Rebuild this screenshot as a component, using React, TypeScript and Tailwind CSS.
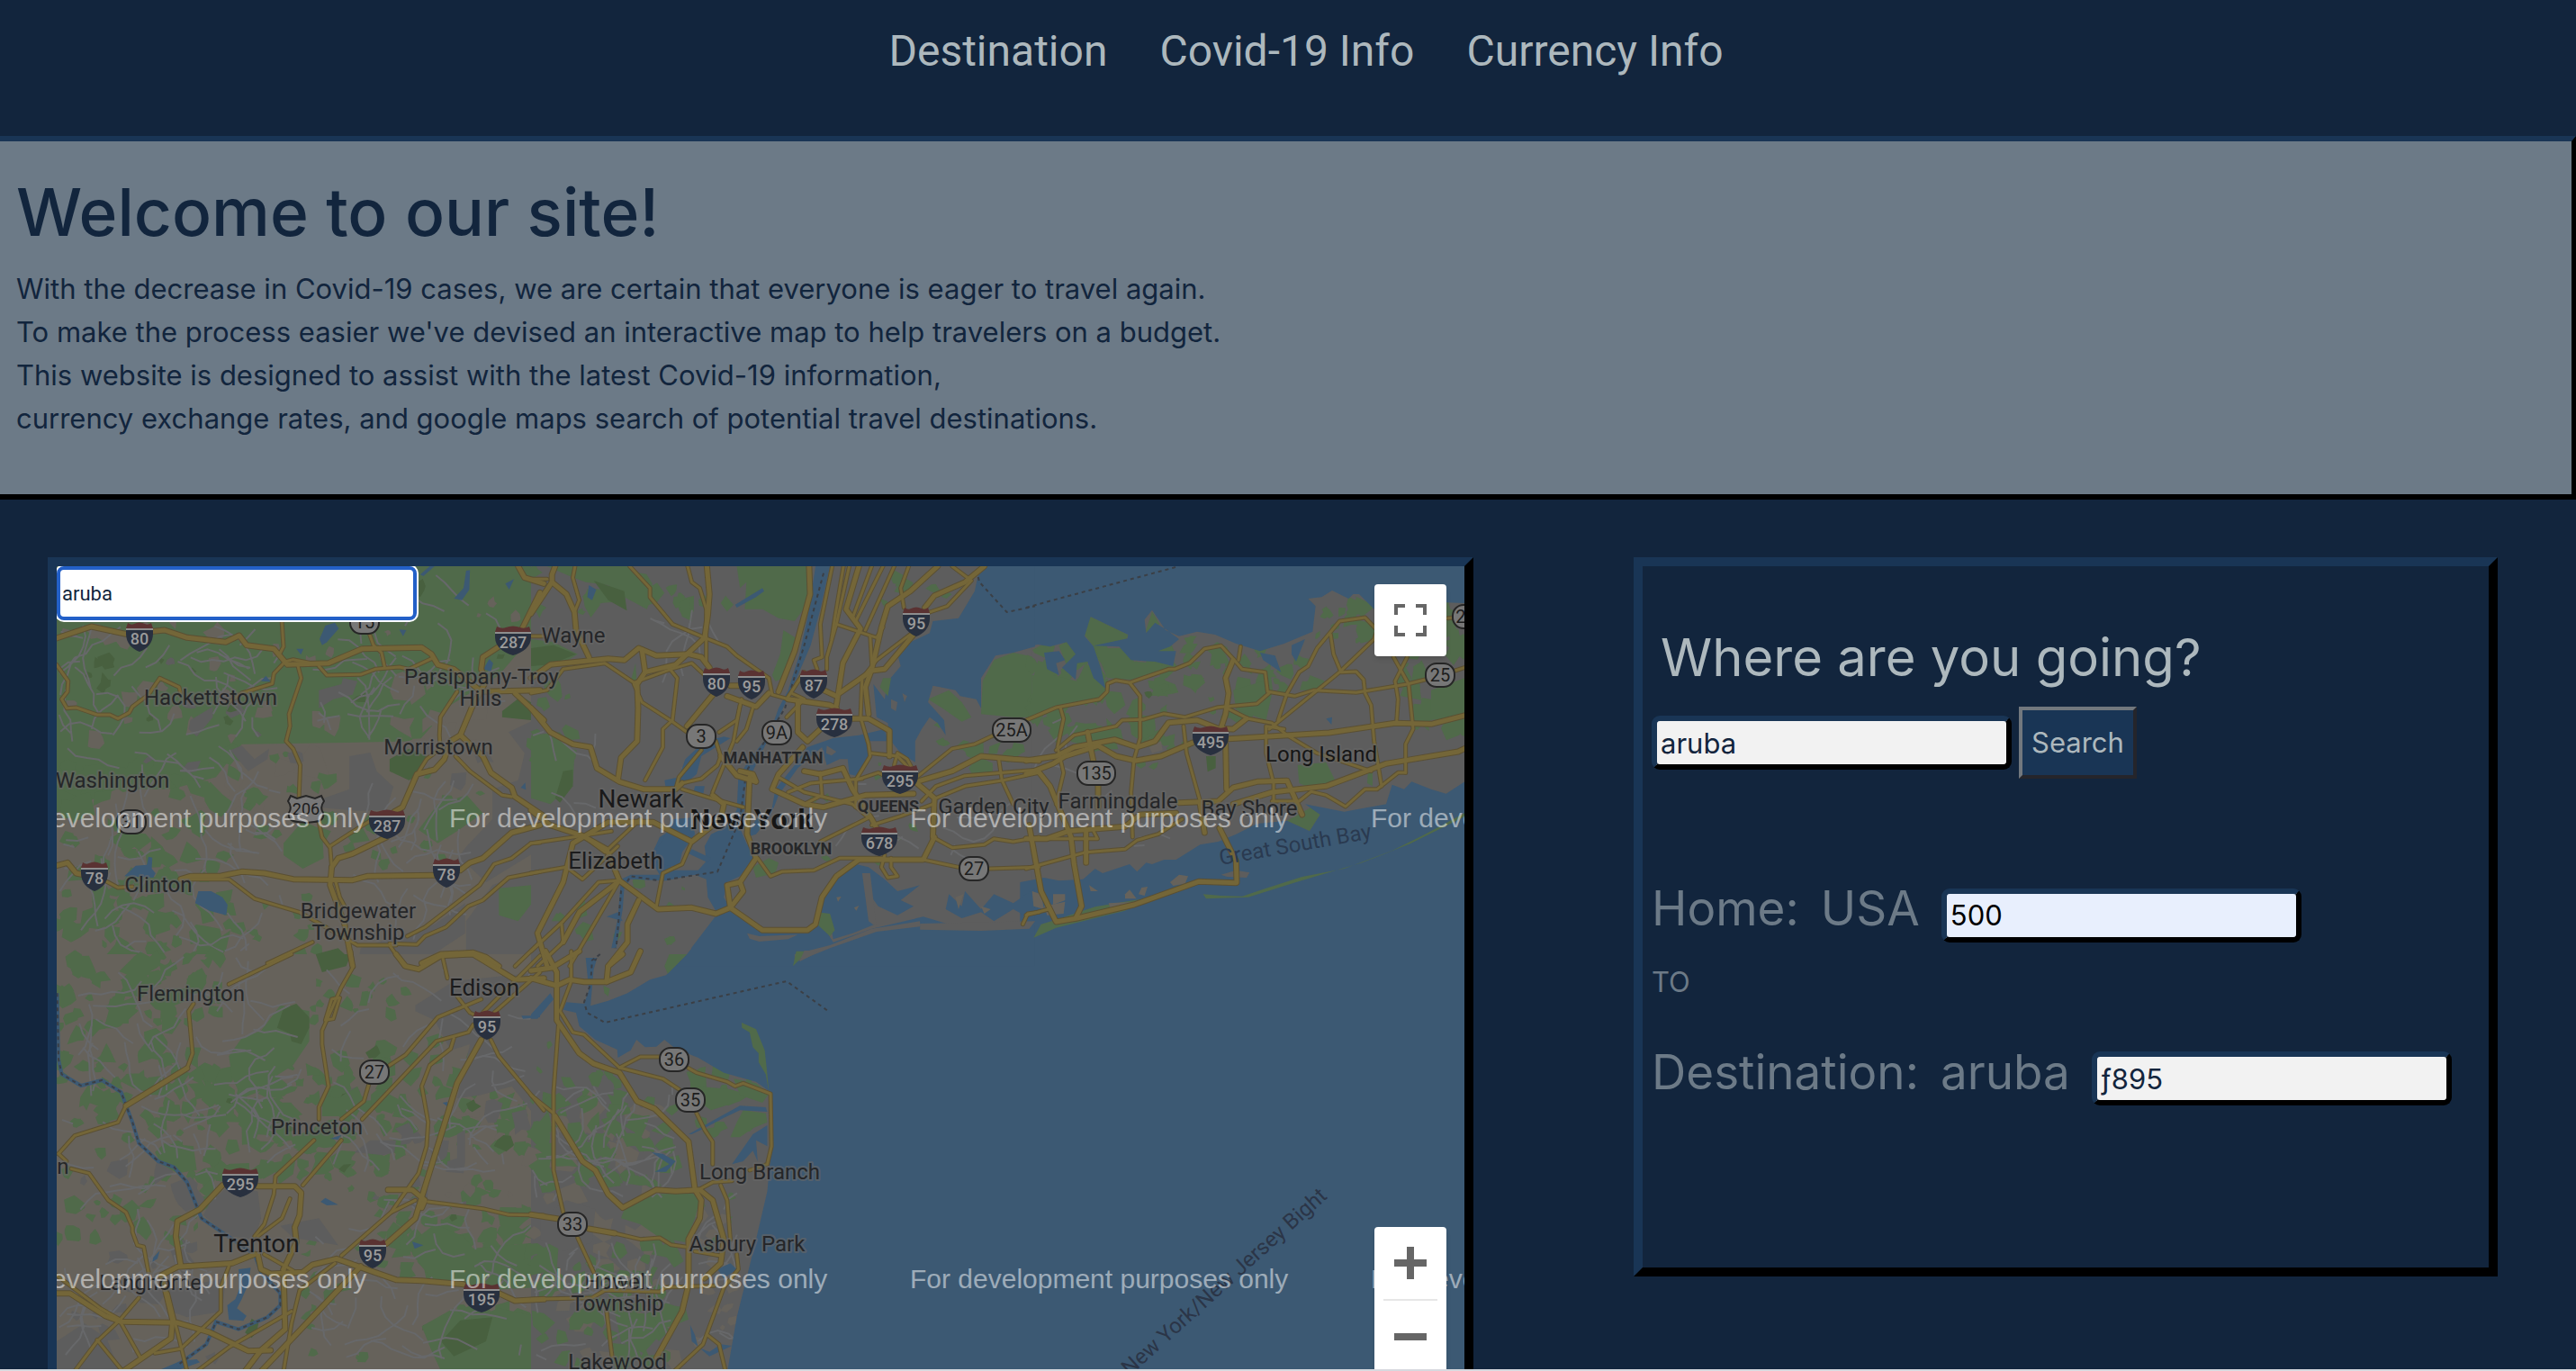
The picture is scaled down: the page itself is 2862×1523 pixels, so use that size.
import React from "react";

type Patch = { c: string; p: string };
type Scatter = { c: string; x: number; y: number; w: number; h: number; n: number; s: number };
type Tile = {
  t: string;
  base: Patch[];
  scatter: Scatter[];
  lanes: { x: number; y: number; w: number; h: number; n: number }[];
  areas: Patch[];
  water: string[];
  islands: Patch[];
  highways: string[];
  roads: string[];
  dashes: string[];
};

const WATER = "#3c5973";
const URBAN = "#5d5d5d";
const RURAL = "#66625b";
const GREEN = "#506a4a";
const FOREST = "#48603f";

function random(seed: number) {
  let s = seed;
  return () => {
    s = (s * 1664525 + 1013904223) % 4294967296;
    return s / 4294967296;
  };
}

function blobs(r: Scatter, seed: number) {
  const rnd = random(seed);
  let d = "";
  for (let i = 0; i < r.n; i++) {
    const cx = r.x + rnd() * r.w;
    const cy = r.y + rnd() * r.h;
    const k = 5 + Math.floor(rnd() * 4);
    const size = r.s * (0.4 + rnd());
    for (let j = 0; j < k; j++) {
      const a = (j / k) * Math.PI * 2 + rnd() * 0.7;
      const m = size * (0.35 + rnd() * 0.75);
      d += `${j ? "L" : "M"}${Math.round(cx + Math.cos(a) * m)} ${Math.round(cy + Math.sin(a) * m)}`;
    }
    d += "Z";
  }
  return d;
}

function laneLines(r: { x: number; y: number; w: number; h: number; n: number }, seed: number) {
  const rnd = random(seed);
  let d = "";
  for (let i = 0; i < r.n; i++) {
    let x = r.x + rnd() * r.w;
    let y = r.y + rnd() * r.h;
    let a = rnd() * Math.PI * 2;
    d += `M${Math.round(x)} ${Math.round(y)}`;
    const k = 3 + Math.floor(rnd() * 5);
    for (let j = 0; j < k; j++) {
      a += (rnd() - 0.5) * 1.3;
      x += Math.cos(a) * 36;
      y += Math.sin(a) * 36;
      if (x < r.x || x > r.x + r.w || y < r.y || y > r.y + r.h) break;
      d += `L${Math.round(x)} ${Math.round(y)}`;
    }
  }
  return d;
}

const tiles: Tile[] = [
  {
    t: "translate(40 610) scale(0.35714 0.33333)",
    base: [
      { c: RURAL, p: "0,0 1568,0 1568,1390 0,1390" },
      { c: GREEN, p: "0,0 1568,0 1568,260 1440,420 1290,520 1190,640 960,645 640,650 560,760 420,800 250,800 120,860 0,900" },
    ],
    scatter: [
      { c: RURAL, x: 80, y: 240, w: 850, h: 400, n: 30, s: 34 },
      { c: RURAL, x: 500, y: 660, w: 400, h: 200, n: 8, s: 50 },
      { c: RURAL, x: 1100, y: 420, w: 300, h: 260, n: 14, s: 45 },
      { c: RURAL, x: 900, y: 130, w: 600, h: 150, n: 6, s: 22 },
      { c: GREEN, x: 70, y: 700, w: 520, h: 640, n: 90, s: 46 },
      { c: GREEN, x: 600, y: 680, w: 320, h: 200, n: 12, s: 32 },
      { c: GREEN, x: 600, y: 850, w: 320, h: 500, n: 18, s: 28 },
      { c: GREEN, x: 950, y: 900, w: 330, h: 160, n: 14, s: 26 },
      { c: GREEN, x: 1150, y: 700, w: 250, h: 150, n: 8, s: 26 },
      { c: URBAN, x: 100, y: 300, w: 1300, h: 500, n: 10, s: 28 },
      { c: FOREST, x: 80, y: 100, w: 1400, h: 500, n: 14, s: 26 },
    ],
    lanes: [
      { x: 70, y: 250, w: 700, h: 400, n: 34 },
      { x: 860, y: 80, w: 600, h: 560, n: 34 },
      { x: 70, y: 650, w: 700, h: 700, n: 48 },
      { x: 950, y: 760, w: 420, h: 560, n: 26 },
    ],
    areas: [
      { c: URBAN, p: "975,690 1040,678 1060,740 1112,792 1090,870 1000,872 890,862 895,830 975,800" },
      { c: URBAN, p: "1568,560 1470,610 1520,680 1500,770 1420,800 1420,900 1340,990 1290,1060 1350,1060 1400,1110 1568,1000" },
      { c: URBAN, p: "1338,1240 1420,1120 1568,1060 1568,1390 1338,1390" },
      { c: URBAN, p: "1240,1250 1335,1180 1335,1280 1180,1390 1000,1390 1010,1330" },
      { c: URBAN, p: "480,570 550,525 550,560 500,625 475,600" },
      { c: URBAN, p: "880,470 950,450 955,430 1000,440 985,485 925,500 880,530" },
      { c: URBAN, p: "605,670 640,655 680,700 725,665 720,700 660,740" },
      { c: GREEN, p: "1440,1130 1540,1120 1550,1170 1500,1240 1440,1220" },
      { c: GREEN, p: "770,980 830,905 890,935 895,1030 830,1065 770,1020" },
      { c: GREEN, p: "1190,935 1250,850 1340,820 1390,880 1310,940 1250,980" },
      { c: FOREST, p: "1100,700 1160,665 1215,690 1200,750 1160,770 1100,740" },
      { c: FOREST, p: "1450,540 1510,490 1568,530 1540,570 1450,560" },
      { c: FOREST, p: "860,1390 870,1350 940,1330 970,1360 960,1390" },
    ],
    water: [
      "495,1180 505,1140 545,1140 580,1160 596,1185 592,1220 540,1205",
      "275,1090 310,1055 345,1052 350,1025 362,1028 360,1065 372,1080 365,1095",
      "882,300 900,255 930,245 942,265 905,310 890,320",
      "1300,165 1330,130 1338,72 1350,70 1348,135 1325,170",
      "810,332 832,332 824,352",
      "1130,268 1152,270 1142,290",
      "1460,115 1487,100 1472,135",
      "1392,400 1410,366 1422,380 1415,408",
      "700,440 715,422 730,442",
      "1508,795 1522,778 1524,802",
      "1195,85 1225,57 1240,57 1205,90",
    ],
    islands: [],
    highways: [
      "64,297 172,258 280,283 400,270 470,295 590,310 632,288 655,320 740,332 782,385 910,380 1015,332 1200,328 1230,350 1250,385 1300,400 1385,475 1568,470",
      "920,1060 915,1120 960,1250 985,1390",
      "450,1100 480,1090 570,1090 640,1075 710,1080 800,1100 985,1103 1030,1090 1240,1087",
      "1320,1070 1350,1045 1390,1030 1480,945 1568,920",
      "1090,960 985,1015 940,1030 920,1060",
      "1440,325 1390,360 1385,400 1400,440 1355,530 1320,620 1290,640 1270,700 1240,735 1185,750 1140,860 1115,875",
      "1320,620 1390,690 1415,745 1480,795 1490,825 1580,890",
      "1490,480 1580,570",
      "1500,57 1520,95 1580,115",
      "1568,145 1510,270",
      "1200,1380 1260,1350 1360,1345 1400,1360 1440,1390",
      "64,1055 98,1045 125,1080 145,1085",
    ],
    roads: [
      "64,385 100,440 98,475 80,500 96,530 125,528 190,552 230,552 255,565 290,545 300,525 350,485 385,430 445,460 450,480",
      "600,510 640,480 735,448 740,415 775,375 800,368 880,385",
      "880,390 905,420 1010,418 1055,400 1130,393 1160,400 1230,365",
      "765,243 770,325 760,345",
      "1035,275 1050,320 1075,345 1085,395",
      "815,390 825,430 787,550 790,590 778,640 800,665 822,720 818,830",
      "880,910 890,960 915,995 920,1060",
      "915,990 980,945 1040,905",
      "1310,475 1258,560 1255,620 1258,665 1215,700 1180,760 1140,860",
      "1305,690 1350,740 1450,820 1480,825",
      "220,1108 255,1128 300,1125",
      "480,1100 600,1100 680,1165 820,1210 1000,1320 1120,1320",
      "1155,1290 1210,1260 1380,1120 1425,1050 1480,1030 1540,980 1568,978",
      "1100,1315 1185,1318 1210,1290 1275,1260 1345,1190 1390,1170 1470,1095 1568,1075",
      "720,1380 860,1310",
      "1100,1320 1145,1390",
      "930,1100 945,1160 960,1190",
      "1540,290 1580,290",
      "1490,1390 1568,1310",
    ],
    dashes: [],
  },
  {
    t: "translate(590 610) scale(0.35714 0.33333)",
    base: [{ c: URBAN, p: "0,0 1568,0 1568,1390 0,1390" }],
    scatter: [
      { c: GREEN, x: 0, y: 60, w: 550, h: 150, n: 14, s: 34 },
      { c: GREEN, x: 0, y: 470, w: 130, h: 280, n: 12, s: 34 },
      { c: GREEN, x: 1080, y: 70, w: 280, h: 160, n: 8, s: 26 },
      { c: GREEN, x: 1250, y: 570, w: 310, h: 160, n: 12, s: 32 },
      { c: GREEN, x: 20, y: 1100, w: 500, h: 270, n: 12, s: 22 },
      { c: GREEN, x: 750, y: 600, w: 500, h: 450, n: 10, s: 18 },
    ],
    lanes: [
      { x: 350, y: 200, w: 250, h: 560, n: 8 },
      { x: 900, y: 780, w: 600, h: 260, n: 8 },
      { x: 0, y: 600, w: 220, h: 300, n: 6 },
    ],
    areas: [
      { c: GREEN, p: "50,57 300,57 390,130 360,200 290,160 240,120 170,110 120,90" },
      { c: GREEN, p: "640,57 860,57 862,180 820,240 770,230 720,200 665,200 670,110 650,130" },
      { c: GREEN, p: "785,270 830,300 790,430 760,440 750,420 775,350" },
      { c: GREEN, p: "0,300 70,310 145,350 100,380 50,400 0,420" },
      { c: GREEN, p: "0,620 90,610 135,690 130,780 60,850 0,830" },
      { c: GREEN, p: "590,180 605,155 630,185 610,208" },
      { c: GREEN, p: "460,180 490,160 500,240 470,225" },
      { c: GREEN, p: "325,380 330,470 310,440" },
      { c: GREEN, p: "1235,500 1300,470 1340,510 1370,560 1340,575 1280,530" },
      { c: GREEN, p: "1405,440 1440,370 1500,345 1568,360 1568,560 1500,560 1400,550" },
      { c: GREEN, p: "690,1060 740,1030 770,1045 760,1080 700,1095" },
      { c: GREEN, p: "415,1380 430,1345 520,1340 470,1390" },
      { c: GREEN, p: "140,1180 165,1160 175,1220 150,1230" },
      { c: FOREST, p: "195,105 290,140 298,205 240,170" },
      { c: FOREST, p: "0,330 70,320 140,350 60,385 0,390" },
      { c: FOREST, p: "100,740 130,735 130,790 90,845 75,830" },
    ],
    water: [
      "1420,57 1568,57 1568,325 1500,345 1445,355 1400,430 1400,530 1385,500 1335,490 1320,470 1250,455 1235,510 1285,570 1290,620 1265,580 1240,560 1215,600 1195,640 1195,710 1150,680 1120,640 1110,580 1075,560 1065,450 1100,500 1110,440 1150,390 1140,350 1180,310 1240,280 1250,240 1330,230 1380,140 1390,90",
      "885,57 930,57 900,200 870,320 830,420 780,540 730,650 690,740 665,800 665,860 650,930 670,980 690,1010 690,1040 650,1090 610,1110 600,1160 620,1200 580,1215 550,1160 545,1100 510,1085 420,1105 310,1100 290,1130 285,1200 265,1330 200,1390 180,1390 250,1330 270,1230 280,1100 310,1085 400,1085 370,1030 400,960 430,940 425,1010 440,1070 520,1070 545,1040 540,990 560,950 600,930 640,870 645,760 680,700 740,620 770,530 800,470 835,350 860,230",
      "860,660 940,630 1020,620 1100,600 1110,640 1040,640 1060,690 1040,720 1010,755 990,750 985,700 960,700 920,720 905,660 830,730 770,820 745,890 700,950 670,960 700,900 750,860 760,800 820,720",
      "415,770 460,760 480,700 540,640 600,625 620,630 530,690 515,750 470,790 420,800",
      "400,1050 370,1030 410,970 440,900 500,895 510,950 470,1010 460,1060",
      "890,1240 910,1150 960,1090 1010,1050 1050,1060 1100,1100 1140,1140 1210,1120 1150,1170 1190,1190 1140,1220 1080,1190 1060,1160 1070,1250 1000,1280 940,1300 930,1240",
      "455,1390 580,1215 620,1195 700,1250 740,1280 860,1280 900,1240 940,1310 1060,1265 1220,1225 1300,1250 1568,1245 1568,1390",
      "635,185 720,130 725,140 700,160 640,195",
      "175,160 180,120 203,135 190,170",
      "1290,1200 1300,1150 1340,1190 1350,1140 1400,1200 1440,1150 1500,1180 1568,1130 1568,1240 1500,1200 1440,1240 1400,1210 1340,1230",
      "500,1000 560,1030 550,1045 490,1015",
      "510,790 540,790 535,820 505,810",
      "235,1225 270,1210 285,1240",
    ],
    islands: [
      { c: URBAN, p: "672,1280 710,1290 830,1285 800,1300 710,1308 680,1298" },
      { c: URBAN, p: "820,1350 930,1320 1060,1265 1210,1240 1210,1258 1075,1275 930,1330 820,1378" },
      { c: URBAN, p: "1210,1248 1568,1240 1550,1265 1400,1272 1210,1268" },
      { c: URBAN, p: "1030,1080 1055,1080 1075,1260 1050,1240" },
      { c: URBAN, p: "920,655 950,675 935,688 918,680" },
      { c: URBAN, p: "1120,500 1140,510 1135,540 1120,530" },
      { c: URBAN, p: "1155,480 1170,490 1162,510" },
      { c: GREEN, p: "1095,430 1120,430 1110,490 1085,460" },
      { c: GREEN, p: "890,1210 930,1215 945,1270 930,1290 890,1250" },
      { c: RURAL, p: "950,1160 965,1158 955,1175" },
      { c: RURAL, p: "1005,1195 1020,1188 1012,1205" },
      { c: RURAL, p: "1320,1160 1345,1150 1330,1200" },
      { c: RURAL, p: "1400,1190 1430,1200 1410,1215" },
    ],
    highways: [
      "75,57 65,85 65,110 0,215",
      "65,110 110,150 135,210 140,270 180,360",
      "0,430 60,385 150,375 240,365 290,370 335,330 390,355 490,350 530,360 555,395",
      "345,335 355,410 330,450 333,530 330,640 280,695 270,770",
      "355,410 450,385 540,295 550,220 555,150 547,57",
      "0,530 60,610 130,650 185,660 205,730 275,775 350,800 450,800 470,780",
      "865,57 868,150 820,340 770,475",
      "570,480 485,590",
      "610,490 700,525 740,480",
      "800,500 930,520 950,530",
      "830,510 830,610 860,640 900,600",
      "565,820 600,850 590,900 500,975 380,910 240,910 130,980 100,1110 20,1280 50,1390",
      "0,870 60,920 160,955 235,1000 275,1105 395,1200 500,1195 575,1215 620,1195 720,1270 860,1270 885,1250 905,1160 950,1090 1020,1035 1100,1035 1220,1035 1255,960",
      "100,1310 150,1210 270,1110",
      "620,1195 610,1120 650,1110 660,1140 620,1195",
      "650,1110 700,1030 672,950 680,760",
      "335,1170 300,1250 300,1310 240,1390",
      "845,660 770,750 750,800 850,850 910,860 1040,820 1190,815",
      "850,740 900,750 970,730 1000,800 1060,900 1075,930",
      "1200,775 1310,740 1400,690 1500,700 1580,705",
      "1410,57 1350,110 1255,155 1225,195",
      "1265,57 1180,140 1110,190 1090,260 1060,400 1040,460 1050,550",
      "1020,57 980,200 1025,265 970,380 950,520",
      "1190,285 1100,400 1060,405 960,480",
      "1000,565 1050,565 1115,605 1115,690",
      "590,690 640,755 700,775 690,750 650,740",
      "1200,780 1255,830 1250,960",
      "620,455 650,455",
      "910,470 950,490",
    ],
    roads: [
      "0,100 50,100",
      "137,57 130,95 150,170 135,210",
      "0,480 50,470 100,400 230,380 320,445 435,400 500,380 545,425",
      "307,57 370,130 370,160 440,250 540,295 610,325 640,355 740,430 750,485 800,500",
      "487,57 500,110 525,130 545,200 545,380",
      "320,450 345,510 440,575 485,610",
      "425,390 455,430 440,570 410,600 410,660 355,770",
      "450,800 460,760 530,670",
      "655,500 640,570 585,610",
      "690,530 670,600 640,640",
      "575,640 590,690 580,720 530,765 470,780",
      "650,520 630,640 565,810",
      "795,560 850,500 810,480",
      "795,500 850,410",
      "937,57 900,250 905,360 880,370 890,400",
      "990,57 950,250 920,360 920,400",
      "972,57 945,230 935,300",
      "1060,57 1000,230",
      "1095,57 1010,240",
      "1130,57 1040,270",
      "1175,57 1150,130 1160,195",
      "1310,57 1370,105 1295,190 1240,210",
      "1185,280 1075,370 1030,430 1025,560 1050,650 1055,690 1010,770 1010,860",
      "950,250 1075,295 1095,260",
      "1055,290 1060,380",
      "1060,680 1140,690 1185,740",
      "470,800 560,830 660,860",
      "0,980 130,960 250,940",
      "0,1080 110,1060 160,1100 270,990",
      "500,975 470,1050 410,1080 390,1190",
      "0,1340 100,1240 210,1110 270,1105",
      "20,1390 100,1310 95,1250",
      "120,1390 180,1280 275,1105",
      "160,955 230,1010 340,900",
      "335,1345 320,1390",
      "705,1030 745,1090 780,1075 880,1070 960,1030 1100,1030",
      "800,810 870,780 1030,765",
      "900,745 905,820 850,850",
      "770,760 850,810 1000,850 1050,895 900,975",
      "1010,770 1080,745 1110,760",
      "1060,920 1150,890 1250,850",
      "1200,760 1310,665 1380,650 1440,620",
      "1190,740 1170,700 1140,680 1130,720",
      "1250,960 1310,995 1410,985 1440,965 1500,975 1580,960",
      "1215,840 1260,790 1350,755 1580,735",
      "1260,830 1350,790 1470,770 1580,745",
      "1455,700 1465,770 1500,850",
      "1220,1035 1330,1060",
      "1425,1065 1580,1060",
      "1100,1020 1090,1060 1110,1095 1140,1090 1120,1060 1120,1030",
      "1530,1250 1545,1215 1580,1210",
    ],
    dashes: [
      "1385,70 1395,110 1480,210 1568,190",
      "910,80 850,320 790,530 670,740 650,900 580,1075 400,1105 310,1090 280,1140 265,1330 190,1375",
    ],
  },
  {
    t: "translate(1140 610) scale(0.33333 0.33333)",
    base: [{ c: URBAN, p: "20,0 1470,0 1470,1390 20,1390" }],
    scatter: [
      { c: GREEN, x: 20, y: 330, w: 450, h: 320, n: 60, s: 44 },
      { c: GREEN, x: 450, y: 280, w: 280, h: 280, n: 20, s: 34 },
      { c: GREEN, x: 720, y: 340, w: 250, h: 140, n: 12, s: 34 },
      { c: GREEN, x: 960, y: 180, w: 200, h: 120, n: 16, s: 32 },
      { c: GREEN, x: 1250, y: 360, w: 220, h: 240, n: 18, s: 38 },
      { c: GREEN, x: 350, y: 600, w: 180, h: 180, n: 9, s: 26 },
      { c: GREEN, x: 1280, y: 180, w: 190, h: 170, n: 16, s: 44 },
      { c: FOREST, x: 40, y: 400, w: 400, h: 200, n: 8, s: 22 },
    ],
    lanes: [
      { x: 330, y: 900, w: 300, h: 120, n: 5 },
      { x: 0, y: 560, w: 300, h: 300, n: 5 },
    ],
    areas: [
      { c: GREEN, p: "190,280 215,225 340,285 335,300 225,325" },
      { c: GREEN, p: "400,270 420,208 445,250 402,282" },
      { c: GREEN, p: "20,420 90,420 170,440 200,375 225,430 260,465 240,500 20,560" },
      { c: GREEN, p: "230,330 340,330 360,375 430,380 480,395 350,435 270,430" },
      { c: GREEN, p: "905,720 1000,710 1030,770 960,800 910,780" },
      { c: GREEN, p: "870,905 950,860 980,885 945,940" },
      { c: GREEN, p: "690,470 790,440 820,480 800,570 700,535" },
      { c: GREEN, p: "1350,470 1461,430 1461,550 1350,570" },
      { c: GREEN, p: "1140,735 1155,730 1155,790 1137,780" },
      { c: FOREST, p: "600,690 632,690 632,730 605,742" },
      { c: RURAL, p: "410,660 450,640 455,670 420,680" },
    ],
    water: ["1000,565 1020,560 1018,585", "780,345 830,355 850,410 790,370", "885,320 930,300 900,375 885,350", "60,345 110,340 130,370 100,380 110,420 70,400"],
    islands: [
      { c: GREEN, p: "590,1150 650,1155 720,1157 800,1130 920,1092 1060,1065 1220,1005 1330,950 1461,880 1461,892 1280,982 1120,1045 900,1110 740,1160 600,1165" },
      { c: GREEN, p: "25,1295 50,1250 100,1235 230,1192 360,1170 400,1165 330,1205 100,1262" },
      { c: RURAL, p: "480,1110 510,1085 540,1090 530,1115 490,1122" },
      { c: URBAN, p: "650,1085 700,1070 745,1078 735,1095 670,1092" },
      { c: RURAL, p: "20,1140 50,1150 60,1200 25,1190" },
      { c: RURAL, p: "90,1150 130,1150 130,1170 90,1185" },
      { c: RURAL, p: "330,1150 345,1135 368,1165 330,1165" },
      { c: RURAL, p: "375,1150 385,1128 405,1125 395,1155" },
      { c: RURAL, p: "210,1120 240,1140 215,1140" },
      { c: RURAL, p: "275,1180 365,1175 350,1195 280,1195" },
      { c: RURAL, p: "60,1190 130,1175 125,1215 70,1220" },
    ],
    highways: [
      "690,370 665,430 675,480 665,550 650,595",
      "0,705 100,690 160,660 295,635 370,660 430,640 475,578 570,570 640,598 690,600 735,565",
      "0,750 90,715 130,690 240,655 300,690 365,705 450,690 555,645",
      "675,632 1010,612 1230,580 1350,583 1461,555",
      "205,610 225,710",
      "510,845 640,840 690,795 770,775 870,772 920,885",
      "690,850 820,810 1000,790 1200,715 1440,675 1461,665",
      "0,965 70,965 140,940 330,925 380,885 500,880",
      "10,920 50,1140 100,1242 170,1230 360,1185 575,1108 700,1112",
      "645,930 700,1040 702,1110",
      "665,650 668,800",
      "40,740 80,790 150,960 160,1050 185,1190 165,1230",
      "240,790 240,860",
      "580,850 595,945",
      "200,935 200,1045",
    ],
    roads: [
      "0,570 100,528 245,500 270,475 272,448 300,437 345,445 475,400 495,400 545,380 595,332 650,322 690,365 720,400 797,410 805,475 895,490 960,470 1100,478 1270,450 1330,435",
      "1430,405 1461,395",
      "345,445 380,490 380,630 360,700 350,810 355,960",
      "115,530 125,565 105,660 125,745 100,850",
      "715,325 708,370",
      "100,670 160,620 300,590 320,570 390,568 460,548 530,560 640,527 770,515 810,480",
      "670,530 740,565 820,580 870,620 970,680 1150,740",
      "860,600 800,590 800,680 825,780 825,840",
      "840,570 870,480 910,410 940,390 970,330 1045,240 1130,228 1170,270 1160,300 1045,410 860,560 810,600",
      "1015,285 1025,350 1050,410 1100,408 1125,435 1130,480 1150,520 1160,640 1185,790",
      "1225,360 1275,450 1290,600 1265,650 1265,745",
      "1270,360 1230,440 1240,500 1235,575",
      "525,590 535,680 580,840",
      "820,840 910,840 950,808 1000,820 1065,858 1130,800 1170,800 1240,745 1265,745",
      "0,1065 200,1010 330,1000 370,970 440,950 520,900",
      "0,1220 75,1200",
      "225,940 238,965 80,965",
      "1405,230 1461,225",
    ],
    dashes: ["0,195 90,170 510,57"],
  },
  {
    t: "translate(40 1060) scale(0.35714 0.33333)",
    base: [{ c: RURAL, p: "0,0 1568,0 1568,1390 0,1390" }],
    scatter: [
      { c: GREEN, x: 70, y: 0, w: 500, h: 560, n: 100, s: 38 },
      { c: GREEN, x: 500, y: 350, w: 500, h: 400, n: 80, s: 44 },
      { c: GREEN, x: 70, y: 560, w: 480, h: 400, n: 40, s: 34 },
      { c: GREEN, x: 850, y: 40, w: 300, h: 460, n: 26, s: 28 },
      { c: GREEN, x: 1050, y: 280, w: 500, h: 560, n: 66, s: 34 },
      { c: GREEN, x: 1120, y: 850, w: 440, h: 230, n: 40, s: 38 },
      { c: GREEN, x: 1250, y: 1150, w: 310, h: 230, n: 26, s: 42 },
      { c: GREEN, x: 830, y: 780, w: 300, h: 590, n: 20, s: 26 },
      { c: URBAN, x: 70, y: 700, w: 480, h: 650, n: 18, s: 44 },
      { c: URBAN, x: 950, y: 450, w: 600, h: 400, n: 10, s: 34 },
      { c: RURAL, x: 1150, y: 500, w: 400, h: 350, n: 8, s: 30 },
      { c: FOREST, x: 600, y: 180, w: 900, h: 1100, n: 14, s: 28 },
    ],
    lanes: [
      { x: 70, y: 0, w: 760, h: 700, n: 60 },
      { x: 70, y: 600, w: 500, h: 740, n: 40 },
      { x: 900, y: 30, w: 640, h: 700, n: 44 },
      { x: 850, y: 800, w: 700, h: 560, n: 38 },
    ],
    areas: [
      { c: GREEN, p: "600,340 640,280 700,255 760,170 850,190 850,290 800,370 740,410 690,460 640,480 610,410" },
      { c: GREEN, p: "370,660 400,630 490,640 500,720 440,730 390,700" },
      { c: GREEN, p: "890,470 940,480 1000,440 1020,490 950,540 890,540" },
      { c: GREEN, p: "1200,1240 1300,1180 1340,1220 1440,1180 1568,1210 1568,1390 1260,1390 1230,1320" },
      { c: GREEN, p: "1180,950 1240,900 1330,940 1360,980 1568,960 1568,1110 1400,1120 1230,1080 1170,1000" },
      { c: FOREST, p: "770,180 810,165 850,210 850,245 825,300 795,290 790,265 750,245" },
      { c: FOREST, p: "1260,1290 1320,1220 1420,1210 1400,1290 1300,1340" },
      { c: FOREST, p: "870,0 980,0 965,40 890,60" },
      { c: URBAN, p: "540,830 590,780 690,790 700,880 680,950 600,940 520,870" },
      { c: URBAN, p: "760,905 880,880 940,970 800,945" },
      { c: URBAN, p: "1180,170 1300,90 1568,60 1568,560 1480,440 1380,470 1310,480 1330,390 1350,300 1290,320 1240,220 1180,190" },
      { c: URBAN, p: "400,1120 590,1080 580,1190 470,1210 420,1190" },
      { c: URBAN, p: "64,1290 150,1230 220,1280 260,1390 64,1390" },
      { c: URBAN, p: "990,660 1040,620 1120,620 1115,660 1080,670" },
      { c: URBAN, p: "1310,600 1335,585 1335,690 1330,730 1275,725 1280,690 1310,680" },
    ],
    water: [
      "630,1050 668,1045 660,1100 640,1150 625,1180 655,1205 645,1222 600,1218 595,1170 620,1150 635,1110",
      "885,825 900,812 940,835 905,837",
      "1170,958 1205,970 1178,982",
      "365,1010 385,988 378,1015 362,1025",
      "1510,205 1540,205 1560,180 1568,180 1568,210 1515,215",
      "390,1383 450,1355 500,1350 510,1360 450,1383",
      "915,615 950,602 940,618",
      "1265,495 1280,492 1282,510",
    ],
    islands: [],
    highways: [
      "1120,0 1150,40 1190,50 1260,5 1360,0 1490,85 1580,80",
      "1385,285 1310,430 1200,810 1180,880 1090,965",
      "1095,785 1170,785 1210,820 1200,845",
      "580,770 510,850 440,890 435,940 450,1035",
      "690,773 805,773 825,795 820,870 805,910 810,960 770,1050",
      "64,1130 105,1130 215,1205 265,1225 440,1228 540,1260 660,1322 730,1320",
      "270,1390 420,1280 425,1220 400,1110 390,1070 440,1042 610,1030 680,1000",
      "690,1000 700,1050 730,1065 830,1060 860,1035 935,1015 1120,1085 1200,1088 1330,1100",
      "1440,1130 1490,1155 1580,1150",
      "1010,1040 700,1390",
      "770,1050 775,1250 700,1320 650,1390",
      "470,380 280,505",
    ],
    roads: [
      "795,0 600,100",
      "490,165 475,190 487,330 470,380 280,505 255,560 120,605 70,665",
      "110,715 165,730 225,820 280,860 300,910 300,925 315,970 335,975 350,1060",
      "70,665 95,690",
      "980,-10 985,45 950,110 890,255 890,300 910,440 880,510 880,550",
      "940,145 920,150 900,220 925,215 945,145",
      "1265,10 1280,80",
      "1310,140 1350,195 1370,205",
      "1568,5 1390,195",
      "1568,60 1425,195",
      "1385,150 1250,210 1150,335 1100,370",
      "1035,435 1020,490 950,550",
      "1360,235 1345,260 1245,290 1015,550",
      "950,620 830,770",
      "865,620 745,740 740,800 710,900 680,940",
      "1300,280 1290,315 1225,370 1200,440 1220,560 1215,640 1190,730 1105,860",
      "1180,820 1105,860 950,1005",
      "1415,285 1440,340 1580,520",
      "1220,825 1390,848 1470,868 1580,870",
      "790,815 765,880 690,940",
      "64,1070 200,1180 265,1220",
      "120,1390 190,1290 260,1220 320,1145",
      "265,1230 325,1345",
      "190,1285 270,1390",
      "410,1130 470,1390",
      "600,1040 575,1110 575,1190 450,1315 370,1330",
      "710,1000 800,1055",
      "930,1030 820,1120 795,1230 770,1390",
      "500,1390 600,1310 795,1190",
    ],
    dashes: [
      "66,130 70,350 80,400 140,438 205,420 265,460 300,560 320,630 380,690 430,710 470,760 515,880 680,1000 700,1060 760,1130 760,1170 720,1210 630,1250 560,1225 530,1300 440,1370",
    ],
  },
  {
    t: "translate(590 1060) scale(0.35714 0.33333)",
    base: [{ c: URBAN, p: "0,0 760,0 760,1390 0,1390" }],
    scatter: [
      { c: RURAL, x: 0, y: 450, w: 450, h: 900, n: 50, s: 42 },
      { c: GREEN, x: 20, y: 480, w: 420, h: 300, n: 56, s: 38 },
      { c: GREEN, x: 80, y: 380, w: 300, h: 120, n: 10, s: 28 },
      { c: GREEN, x: 500, y: 400, w: 220, h: 200, n: 14, s: 34 },
      { c: GREEN, x: 0, y: 950, w: 450, h: 420, n: 46, s: 44 },
      { c: GREEN, x: 510, y: 800, w: 150, h: 400, n: 8, s: 18 },
      { c: GREEN, x: 0, y: 250, w: 60, h: 250, n: 5, s: 26 },
      { c: RURAL, x: 510, y: 820, w: 150, h: 500, n: 14, s: 26 },
    ],
    lanes: [
      { x: 0, y: 420, w: 480, h: 420, n: 40 },
      { x: 0, y: 960, w: 480, h: 420, n: 34 },
      { x: 500, y: 780, w: 180, h: 560, n: 10 },
    ],
    areas: [
      { c: GREEN, p: "290,850 380,800 500,795 525,815 510,880 480,960 400,945 340,900 280,880" },
      { c: GREEN, p: "0,1020 60,960 85,980 80,1050 0,1070" },
      { c: GREEN, p: "640,560 660,520 730,530 735,560 690,580 650,610 620,610" },
      { c: GREEN, p: "520,440 620,450 680,470 650,490 560,520 520,490" },
      { c: GREEN, p: "630,415 700,430 740,465 720,495 650,470" },
      { c: GREEN, p: "260,1190 380,1200 400,1270 350,1330 280,1290" },
      { c: URBAN, p: "30,880 110,820 200,850 190,960 100,990 30,950" },
    ],
    water: [
      "490,600 590,540 650,505 730,510 735,525 650,520 600,545 540,580 500,600",
      "625,700 690,600 735,570 735,640 700,620 705,690 690,655 660,690",
      "375,660 410,665 450,690 420,725 385,725 430,700",
      "580,1050 620,1030 640,1050 600,1080",
      "495,1235 510,1270 520,1310 555,1325 590,1300 625,1305 555,1340 500,1290",
      "0,200 60,130 70,150 20,215 0,215",
    ],
    islands: [
      { c: URBAN, p: "215,-20 500,-20 485,0 420,70 370,85 300,130 240,155 185,172 190,110 195,50" },
      { c: GREEN, p: "430,0 485,0 425,65 415,40" },
      { c: GREEN, p: "225,105 245,115 240,140 228,130" },
      { c: GREEN, p: "655,228 700,250 727,320 735,400 740,460 730,400 708,360 708,330 690,310 680,260 656,245" },
      { c: GREEN, p: "815,40 825,-10 860,-10" },
      { c: URBAN, p: "835,25 880,0 900,-12 850,-12" },
    ],
    highways: [
      "45,-10 80,60 80,220 150,330 195,365 275,395 330,490 385,515 490,625 510,785 530,820 525,880 490,950 490,1100 470,1190 390,1345",
      "0,80 80,105 120,85 165,92 235,92 310,60 340,-10",
      "235,92 240,40 285,0",
      "0,55 65,45 150,-10",
      "75,540 160,690 200,720 240,800 285,845 390,785 450,790 525,785 565,820 600,950 590,1030 540,1080",
      "0,868 85,882",
      "180,915 260,930",
    ],
    roads: [
      "125,-10 125,90 90,190 130,260 165,268 275,378 410,415 460,450",
      "85,240 70,460 70,720 100,860",
      "0,470 70,530",
      "275,378 340,342 400,342",
      "490,380 515,395 610,425 635,440 660,430 745,465 748,640 735,700 680,720",
      "515,530 540,585 565,625 565,700",
      "530,780 565,760 625,755",
      "590,770 610,820 620,950",
      "260,930 340,950 400,945 435,968 480,975",
      "145,945 195,1060",
      "0,1150 190,1145 230,1120 400,1125 420,1110 570,1105",
      "510,990 590,1005",
      "640,1000 645,1050 600,1110 535,1300 445,1390",
      "550,1270 585,1300 605,1390",
      "235,1190 252,1340",
    ],
    dashes: ["215,0 190,20 185,100 165,160 175,195 230,228 795,90 925,190"],
  },
];

/* Sea areas are a full rectangle with the coastline cut out of it. */
const seas = [
  {
    t: "translate(1140 610) scale(0.33333 0.33333)",
    d: "M-20 0H1470V1390H-20Z M-20 330L40 318 80 325 135 310 165 350 120 395 165 435 170 380 205 375 225 430 265 465 250 400 225 325 195 290 215 225 340 285 338 298 225 322 310 325 350 370 430 375 490 390 500 340 440 340 480 325 510 300 470 270 430 245 400 280 395 235 420 203 465 270 510 290 570 275 630 285 700 315 780 340 860 315 955 275 965 190 940 165 985 160 1020 138 1075 165 1090 150 1110 150 1160 200 1200 170 1470 180 1470 770 1400 815 1350 800 1285 775 1260 800 1220 785 1200 850 1060 875 930 850 980 885 945 940 870 905 770 915 700 950 640 975 580 985 500 1035 460 1035 420 1050 400 1045 370 1075 345 1050 255 1080 230 1065 190 1100 110 1105 60 1095 -20 1110Z",
  },
  {
    t: "translate(590 1060) scale(0.35714 0.33333)",
    d: "M170 12H3000V1390H0V1383H612L640 1210 675 1060 700 950 735 790 748 640 745 460 700 425 600 395 520 345 450 315 415 285 390 308 355 310 328 285 310 320 270 345 268 318 200 285 150 240 140 195 100 185 110 160 165 165 180 120Z",
  },
];

const labels: { x: number; y: number; s: string; k: "town" | "city" | "hub" | "metro" | "region" | "boro" }[] = [
  { x: 234, y: 783, s: "Hackettstown", k: "town" },
  { x: 535, y: 760, s: "Parsippany-Troy", k: "town" },
  { x: 534, y: 784, s: "Hills", k: "town" },
  { x: 637, y: 714, s: "Wayne", k: "town" },
  { x: 487, y: 838, s: "Morristown", k: "town" },
  { x: 125, y: 875, s: "Washington", k: "town" },
  { x: 712, y: 897, s: "Newark", k: "hub" },
  { x: 835, y: 921, s: "New York", k: "metro" },
  { x: 684, y: 965, s: "Elizabeth", k: "city" },
  { x: 176, y: 991, s: "Clinton", k: "town" },
  { x: 398, y: 1020, s: "Bridgewater", k: "town" },
  { x: 398, y: 1044, s: "Township", k: "town" },
  { x: 859, y: 848, s: "MANHATTAN", k: "boro" },
  { x: 987, y: 902, s: "QUEENS", k: "boro" },
  { x: 879, y: 949, s: "BROOKLYN", k: "boro" },
  { x: 1104, y: 904, s: "Garden City", k: "town" },
  { x: 1242, y: 898, s: "Farmingdale", k: "town" },
  { x: 1388, y: 906, s: "Bay Shore", k: "town" },
  { x: 1468, y: 846, s: "Long Island", k: "region" },
  { x: 212, y: 1112, s: "Flemington", k: "town" },
  { x: 538, y: 1106, s: "Edison", k: "city" },
  { x: 352, y: 1260, s: "Princeton", k: "town" },
  { x: 285, y: 1391, s: "Trenton", k: "hub" },
  { x: 167, y: 1433, s: "Langhorne", k: "town" },
  { x: 70, y: 1304, s: "n", k: "town" },
  { x: 844, y: 1310, s: "Long Branch", k: "town" },
  { x: 830, y: 1390, s: "Asbury Park", k: "town" },
  { x: 686, y: 1432, s: "Howell", k: "town" },
  { x: 686, y: 1456, s: "Township", k: "town" },
  { x: 686, y: 1521, s: "Lakewood", k: "town" },
];

const labelStyle = {
  town: "fill-[#252628] text-[24px]",
  city: "fill-[#1c1c1d] text-[26px]",
  region: "fill-[#161616] text-[24px]",
  hub: "fill-[#1a1a1b] text-[28px]",
  metro: "fill-[#161616] text-[32px] font-bold",
  boro: "fill-[#262729] text-[18px] font-bold",
};

const interstates: [number, number, string][] = [
  [155, 708, "80"],
  [570, 712, "287"],
  [430, 916, "287"],
  [105, 974, "78"],
  [496, 970, "78"],
  [1018, 691, "95"],
  [796, 758, "80"],
  [835, 761, "95"],
  [904, 760, "87"],
  [927, 803, "278"],
  [1000, 866, "295"],
  [977, 935, "678"],
  [1345, 823, "495"],
  [541, 1139, "95"],
  [267, 1314, "295"],
  [414, 1393, "95"],
  [535, 1442, "195"],
];

const routes: [number, number, string][] = [
  [779, 818, "3"],
  [863, 814, "9A"],
  [1124, 811, "25A"],
  [1218, 859, "135"],
  [1600, 750, "25"],
  [1635, 685, "25A"],
  [1082, 965, "27"],
  [416, 1191, "27"],
  [749, 1177, "36"],
  [767, 1222, "35"],
  [636, 1360, "33"],
  [405, 691, "15"],
  [146, 913, "31"],
];

function Interstate({ x, y, n }: { x: number; y: number; n: string }) {
  const w = n.length > 2 ? 20 : 15;
  return (
    <g transform={`translate(${x} ${y})`}>
      <path
        d={`M${-w} -8H${w}V-4C${w} 6 ${w * 0.55} 13 0 16C${-w * 0.55} 13 ${-w} 6 ${-w} -4Z`}
        fill="#28303f"
      />
      <path
        d={`M${-w} -10L${-w + 2} -16Q${-w * 0.6} -13 ${-w * 0.4} -15Q0 -18 ${w * 0.4} -15Q${w * 0.6} -13 ${w - 2} -16L${w} -10Z`}
        fill="#5a3232"
      />
      <path d={`M${-w} -9H${w}`} stroke="#8d8d8d" strokeWidth="2" />
      <text y="8" textAnchor="middle" className="fill-[#9b9b9b] text-[18px] font-medium">
        {n}
      </text>
    </g>
  );
}

function Route({ x, y, n }: { x: number; y: number; n: string }) {
  const w = n.length > 2 ? 42 : 32;
  return (
    <g transform={`translate(${x} ${y})`}>
      <rect x={-w / 2} y="-13" width={w} height="26" rx="12" fill="#777777" stroke="#262626" strokeWidth="2" />
      <text y="7" textAnchor="middle" className="fill-[#1d1d1d] text-[20px]">
        {n}
      </text>
    </g>
  );
}

function MapDrawing() {
  return (
    <svg
      viewBox="63 629 1564 900"
      preserveAspectRatio="xMinYMin slice"
      className="block h-full w-full font-[Roboto,sans-serif]"
      role="img"
      aria-label="Map of New York and New Jersey"
    >
      {tiles.map((tile, i) => (
        <g key={i} transform={tile.t}>
          {tile.base.map((a, j) => (
            <polygon key={j} points={a.p} fill={a.c} />
          ))}
          {tile.scatter.map((r, j) => (
            <path key={j} d={blobs(r, 17 + i * 101 + j * 13)} fill={r.c} />
          ))}
          {tile.areas.map((a, j) => (
            <polygon key={j} points={a.p} fill={a.c} />
          ))}
          {tile.lanes.map((r, j) => (
            <path
              key={j}
              d={laneLines(r, 7 + i * 57 + j * 31)}
              fill="none"
              stroke="#67686a"
              strokeWidth="2"
              strokeLinejoin="round"
              vectorEffect="non-scaling-stroke"
            />
          ))}
        </g>
      ))}
      {seas.map((s, i) => (
        <path key={i} transform={s.t} d={s.d} fill={WATER} fillRule="evenodd" />
      ))}
      {tiles.map((tile, i) => (
        <g key={i} transform={tile.t}>
          {tile.water.map((p, j) => (
            <polygon key={j} points={p} fill={WATER} />
          ))}
          {tile.islands.map((a, j) => (
            <polygon key={j} points={a.p} fill={a.c} />
          ))}
          {i === 3 &&
            tile.dashes.map((p, j) => (
              <polyline key={j} points={p} fill="none" stroke={WATER} strokeWidth="4" vectorEffect="non-scaling-stroke" />
            ))}
          {tile.dashes.map((p, j) => (
            <polyline
              key={j}
              points={p}
              fill="none"
              stroke="#3b3f45"
              strokeWidth="2"
              strokeDasharray="4 4"
              vectorEffect="non-scaling-stroke"
            />
          ))}
        </g>
      ))}
      <g fill="none" strokeLinejoin="round" strokeLinecap="round">
        {[
          { c: "#5b5033", h: 7, r: 5 },
          { c: "#746638", h: 5, r: 3 },
        ].map((pass) =>
          tiles.map((tile, i) => (
            <g key={pass.c + i} transform={tile.t} stroke={pass.c}>
              {tile.roads.map((p, j) => (
                <polyline key={j} points={p} strokeWidth={pass.r} vectorEffect="non-scaling-stroke" />
              ))}
              {tile.highways.map((p, j) => (
                <polyline key={"h" + j} points={p} strokeWidth={pass.h} vectorEffect="non-scaling-stroke" />
              ))}
            </g>
          )),
        )}
      </g>
      {interstates.map(([x, y, n], i) => (
        <Interstate key={i} x={x} y={y} n={n} />
      ))}
      {routes.map(([x, y, n], i) => (
        <Route key={i} x={x} y={y} n={n} />
      ))}
      <g transform="translate(340 899)">
        <path
          d="M-17 -15L-10 -12L0 -15L10 -12L17 -15L20 -9Q15 -2 19 4Q21 13 9 14L0 15L-9 14Q-21 13 -19 4Q-15 -2 -20 -9Z"
          fill="#777777"
          stroke="#262626"
          strokeWidth="2"
        />
        <text y="6" textAnchor="middle" className="fill-[#1d1d1d] text-[18px]">
          206
        </text>
      </g>
      {labels.map((l, i) => (
        <text
          key={i}
          x={l.x}
          y={l.y}
          textAnchor="middle"
          stroke="#66666699"
          strokeWidth="4"
          strokeLinejoin="round"
          paintOrder="stroke"
          className={labelStyle[l.k]}
        >
          {l.s}
        </text>
      ))}
      <text transform="translate(1356 961) rotate(-10)" className="fill-[#2a3a50] text-[24px]">
        Great South Bay
      </text>
      <text transform="translate(1255 1529) rotate(-42)" className="fill-[#2b3547] text-[24px]">
        New York/New Jersey Bight
      </text>
      {[919, 1431].map((y) =>
        [-13, 499, 1011, 1523].map((x) => (
          <text
            key={x + "-" + y}
            x={x}
            y={y}
            className="fill-white/50 font-['Liberation_Sans',Arial,sans-serif] text-[30px]"
          >
            For development purposes only
          </text>
        )),
      )}
    </svg>
  );
}

const panel =
  "border-[10px] border-t-[#193555] border-l-[#193555] border-r-black border-b-black";
const field =
  "h-[60px] w-[400px] rounded-[9px] border-[6px] border-t-[#193555] border-l-[#193555] border-r-black border-b-black px-1 text-[31px] leading-[40px] outline-none";

export default function App() {
  return (
    <div className="flex h-screen flex-col overflow-hidden bg-[#12253d] font-[Inter,sans-serif] text-[#12253d]">
      <nav className="shrink-0 pt-[25px] pb-[62px] font-[Roboto,sans-serif]">
        <ul className="flex justify-center gap-[58px] pl-10 text-[48px] leading-[64px] text-[#adb8bd]">
          <li>
            <a href="#destination">Destination</a>
          </li>
          <li>
            <a href="#covid">Covid-19 Info</a>
          </li>
          <li>
            <a href="#currency">Currency Info</a>
          </li>
        </ul>
      </nav>

      <header className="shrink-0 border-t-[6px] border-r-[5px] border-b-[6px] border-t-[#193555] border-r-black border-b-black bg-[#6c7a87] px-[18px] pt-[31px] pb-[60px]">
        <h1 className="text-[73px] leading-[96px] font-medium">Welcome to our site!</h1>
        <p className="mt-[13px] text-[31px] leading-[48px]">
          With the decrease in Covid-19 cases, we are certain that everyone is eager to travel again.
          <br />
          To make the process easier we've devised an interactive map to help travelers on a budget.
          <br />
          This website is designed to assist with the latest Covid-19 information,
          <br />
          currency exchange rates, and google maps search of potential travel destinations.
        </p>
      </header>

      <main className="grid min-h-0 flex-1 grid-cols-[33fr_20fr] items-start gap-[178px] overflow-hidden pt-16 pr-[87px] pl-[53px]">
        <section id="destination" className={`relative h-[920px] overflow-hidden bg-[#3c5973] ${panel}`}>
          <MapDrawing />
          <input
            type="text"
            aria-label="Search the map"
            defaultValue="aruba"
            className="absolute top-0 left-0 h-[60px] w-[400px] rounded-lg border-4 border-[#2360c8] bg-white px-0.5 font-[Roboto,sans-serif] text-[22px] leading-[40px] shadow-[0_0_0_2px_white] outline-none"
          />
          <button
            type="button"
            aria-label="Toggle fullscreen view"
            className="absolute top-5 right-5 flex size-20 items-center justify-center rounded bg-white shadow-md"
          >
            <svg viewBox="0 0 36 36" className="size-9" fill="none" stroke="#666666" strokeWidth="4">
              <path d="M2 12V2H12M24 2H34V12M34 24V34H24M12 34H2V24" />
            </svg>
          </button>
          <div className="absolute top-[734px] right-5 flex w-20 flex-col items-center rounded bg-white shadow-md">
            <button type="button" aria-label="Zoom in" className="flex size-20 items-center justify-center">
              <svg viewBox="0 0 36 36" className="size-9" fill="none" stroke="#666666" strokeWidth="8">
                <path d="M0 18H36M18 0V36" />
              </svg>
            </button>
            <hr className="h-0.5 w-[60px] border-0 bg-[#e6e6e6]" />
            <button type="button" aria-label="Zoom out" className="flex size-20 items-center justify-center">
              <svg viewBox="0 0 36 36" className="size-9" fill="none" stroke="#666666" strokeWidth="8">
                <path d="M0 18H36" />
              </svg>
            </button>
          </div>
        </section>

        <section id="currency" className={`px-2.5 pt-[69px] pb-[180px] text-[#6c7a87] ${panel}`}>
          <label htmlFor="place" className="ml-2.5 block text-[58px] leading-[64px] text-[#adb8bd]">
            Where are you going?
          </label>
          <div className="mt-[23px] flex items-center gap-2">
            <input id="place" type="text" defaultValue="aruba" className={`bg-[#f2f2f2] text-[#12253d] ${field}`} />
            <button
              type="button"
              className="h-20 border-4 border-t-[#72787e] border-r-[#25252b] border-b-[#25252b] border-l-[#72787e] bg-[#193555] px-2.5 text-[31px] text-[#adb8bd]"
            >
              Search
            </button>
          </div>
          <div className="mt-[114px] flex items-baseline gap-6 text-[53px] leading-[60px]">
            <label htmlFor="home" className="flex gap-6">
              <span>Home:</span>
              <span>USA</span>
            </label>
            <input id="home" type="text" defaultValue="500" className={`bg-[#e8effd] text-black ${field}`} />
          </div>
          <p className="mt-5 text-[31px] leading-[48px]">TO</p>
          <div className="mt-[46px] flex items-baseline gap-6 text-[53px] leading-[60px]">
            <label htmlFor="away" className="flex gap-6">
              <span>Destination:</span>
              <span>aruba</span>
            </label>
            <input id="away" type="text" defaultValue="ƒ895" className={`bg-[#f2f2f2] text-[#12253d] ${field}`} />
          </div>
        </section>
      </main>
      <footer className="h-0.5 shrink-0 bg-[#d7d9df]" />
    </div>
  );
}
